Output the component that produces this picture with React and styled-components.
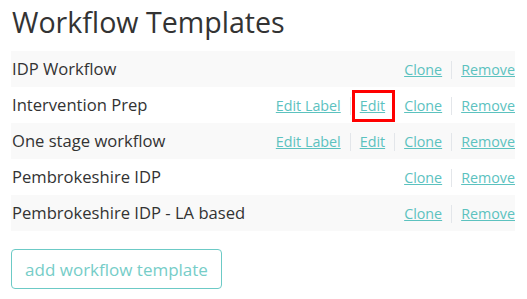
import React from "react";
import styled, { createGlobalStyle } from "styled-components";

const GlobalStyle = createGlobalStyle`
  body {
    margin: 0;
    background: #fff;
    font-family: "Open Sans", "Noto Sans", sans-serif;
  }
`;

const templates = [
  { name: "IDP Workflow", editable: false },
  { name: "Intervention Prep", editable: true, highlight: true },
  { name: "One stage workflow", editable: true },
  { name: "Pembrokeshire IDP", editable: false },
  { name: "Pembrokeshire IDP - LA based", editable: false },
];

const App = () => {
  return (
    <Page>
      <GlobalStyle />
      <Title>Workflow Templates</Title>
      <Table>
        {templates.map((t, i) => (
          <Row key={t.name} $striped={i % 2 === 0}>
            <Name>{t.name}</Name>
            <Actions>
              {t.editable && (
                <>
                  <ActionLink href="#">Edit Label</ActionLink>
                  <Divider />
                  <ActionLink href="#" $highlight={t.highlight}>
                    Edit
                  </ActionLink>
                  <Divider />
                </>
              )}
              <ActionLink href="#">Clone</ActionLink>
              <Divider />
              <ActionLink href="#">Remove</ActionLink>
            </Actions>
          </Row>
        ))}
      </Table>
      <AddButton type="button">add workflow template</AddButton>
    </Page>
  );
};

export default App;

const Page = styled.div`
  padding: 0 12px 0 11px;
  color: #333;
`;

const Title = styled.h1`
  margin: 5px 0 13px 1px;
  font-size: 28.6px;
  line-height: 33px;
  font-weight: 400;
  color: #333;
`;

const Table = styled.div`
  display: flex;
  flex-direction: column;
`;

const Row = styled.div`
  display: flex;
  align-items: center;
  justify-content: space-between;
  height: 36px;
  padding: 0 0 0 1px;
  background: ${(p) => (p.$striped ? "#f9f9f9" : "#fff")};
`;

const Name = styled.span`
  font-size: 16.6px;
  line-height: 20px;
  color: #333;
`;

const Actions = styled.div`
  display: flex;
  align-items: center;
  gap: 9px;
  padding-top: 1px;
`;

const ActionLink = styled.a`
  position: relative;
  font-size: 14.3px;
  line-height: 20px;
  color: #5cc2bf;
  text-decoration: underline;

  ${(p) =>
    p.$highlight &&
    `
    &::after {
      content: "";
      position: absolute;
      left: -8px;
      right: -10px;
      top: -6px;
      bottom: -6px;
      border: 3px solid #f00;
    }
  `}
`;

const Divider = styled.span`
  width: 1px;
  height: 18px;
  background: #e3e6ea;
`;

const AddButton = styled.button`
  margin-top: 18px;
  height: 40px;
  width: 211px;
  padding: 0;
  border: 1px solid #6ccac6;
  border-radius: 4px;
  background: #fff;
  font-family: "Open Sans", "Noto Sans", sans-serif;
  font-size: 17px;
  white-space: nowrap;
  color: #76cdc8;
  cursor: pointer;
`;
